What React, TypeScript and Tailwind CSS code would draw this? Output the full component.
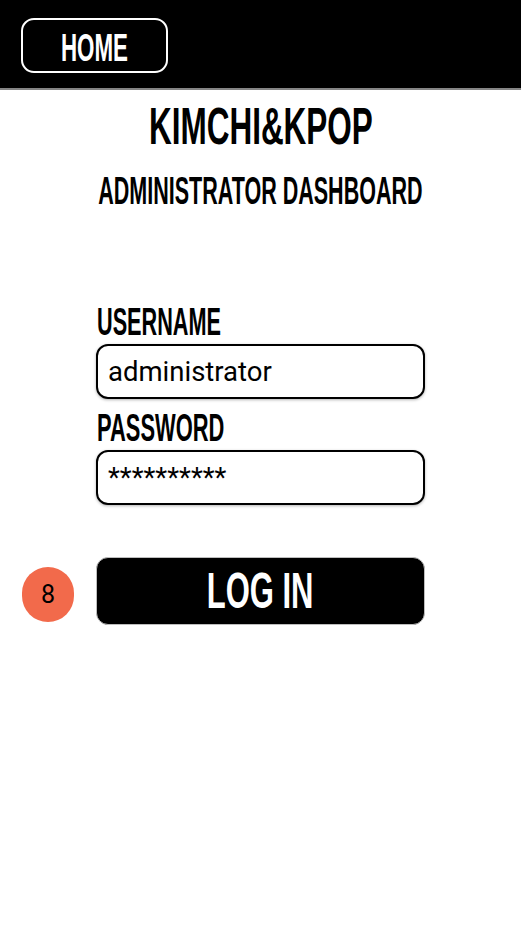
import React from "react";

const display = "font-['Liberation_Sans',Arial,sans-serif] font-bold";

function Field({ label, value, scale }: { label: string; value: string; scale: string }) {
  return (
    <>
      <div className={`${display} text-[38px] leading-[38px] text-black whitespace-nowrap`}>
        <span className={`inline-block origin-left ${scale}`}>{label}</span>
      </div>
      <div className="mt-[3px] h-[55px] w-[329px] rounded-[12px] border-2 border-black bg-white shadow-[0_1px_3px_rgba(0,0,0,0.3)] flex items-center pl-[10px] font-['Roboto',sans-serif] text-[27.5px] text-black">
        {value}
      </div>
    </>
  );
}

export default function App() {
  return (
    <div className="w-[521px] h-[927px] bg-white">
      {/* top bar */}
      <div className="h-[90px] bg-black border-b-2 border-[#858585] pl-[21px] pt-[18px]">
        <button className="w-[147px] h-[55px] rounded-[13px] border-2 border-white flex items-center justify-center pt-1">
          <span className={`${display} text-[39px] leading-[39px] text-white inline-block scale-x-[0.573]`}>
            HOME
          </span>
        </button>
      </div>

      <div className="flex flex-col items-center">
        <h1 className={`${display} mt-[10px] text-[52px] leading-[52px] text-black whitespace-nowrap`}>
          <span className="inline-block scale-x-[0.605]">KIMCHI&amp;KPOP</span>
        </h1>
        <h2 className={`${display} mt-[20px] text-[38px] leading-[38px] text-black whitespace-nowrap`}>
          <span className="inline-block scale-x-[0.566]">ADMINISTRATOR DASHBOARD</span>
        </h2>
      </div>

      <div className="pl-[96px] mt-[93px] flex flex-col">
        <Field label="USERNAME" value="administrator" scale="scale-x-[0.57] translate-x-[1px]" />
        <div className="mt-[10px]" />
        <Field label="PASSWORD" value="**********" scale="scale-x-[0.576] translate-x-[1px]" />
      </div>

      <div className="mt-[52px] pl-[22px] flex items-center gap-[22px]">
        <div className="w-[52px] h-[55px] rounded-full bg-[#f26a4b] flex items-center justify-center font-['Roboto',sans-serif] text-[25px] text-black mt-[7px]">
          8
        </div>
        <button className="w-[329px] h-[68px] rounded-[12px] bg-black border border-[#bdbdbd] flex items-center justify-center">
          <span className={`${display} text-[50px] leading-[50px] text-white inline-block scale-x-[0.62]`}>
            LOG IN
          </span>
        </button>
      </div>
    </div>
  );
}
